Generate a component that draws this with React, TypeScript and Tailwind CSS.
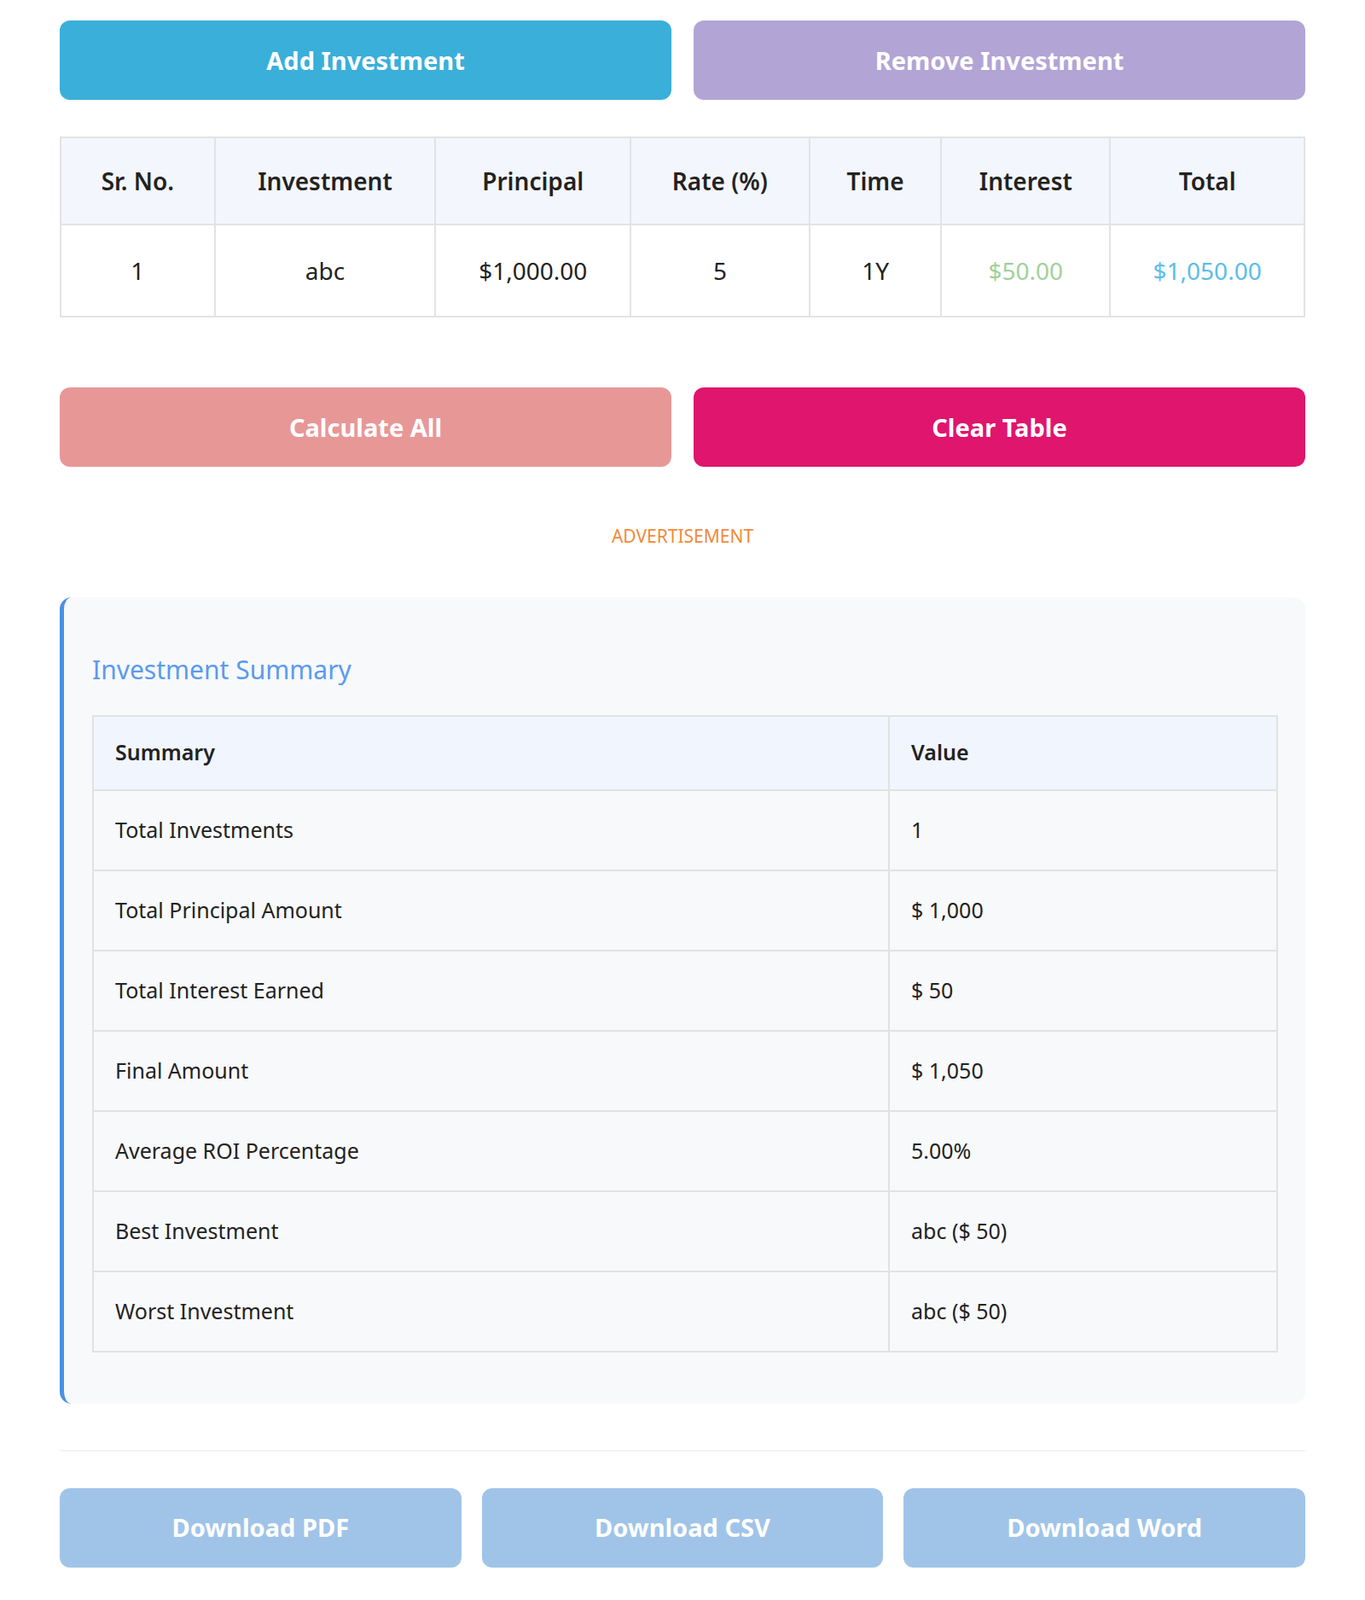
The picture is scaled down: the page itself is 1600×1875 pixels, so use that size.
import React from "react";

const Btn = ({ label, cls }: { label: string; cls: string }) => (
  <button
    className={`h-[93px] rounded-[12px] text-white font-bold text-[29px] font-['Liberation_Sans',Arial,sans-serif] ${cls}`}
  >
    {label}
  </button>
);

const summary = [
  ["Total Investments", "1"],
  ["Total Principal Amount", "$ 1,000"],
  ["Total Interest Earned", "$ 50"],
  ["Final Amount", "$ 1,050"],
  ["Average ROI Percentage", "5.00%"],
  ["Best Investment", "abc ($ 50)"],
  ["Worst Investment", "abc ($ 50)"],
];

export default function App() {
  const heads = ["Sr. No.", "Investment", "Principal", "Rate (%)", "Time", "Interest", "Total"];
  const widths = ["w-[181px]", "w-[259px]", "w-[229px]", "w-[210px]", "w-[155px]", "w-[198px]", "w-[228px]"];
  return (
    <div className="bg-white min-h-[1875px] px-[70px] pt-[24px] font-['Open_Sans','Noto_Sans',sans-serif] text-[#222]">
      <div className="grid grid-cols-2 gap-[26px]">
        <Btn label="Add Investment" cls="bg-[#3aafda]" />
        <Btn label="Remove Investment" cls="bg-[#b2a5d5]" />
      </div>

      <table className="mt-[43px] w-full border-collapse text-[28px] text-center">
        <thead>
          <tr className="bg-[#f3f6fd] h-[102px]">
            {heads.map((h, i) => (
              <th key={h} className={`border-2 border-[#e3e3e3] font-semibold ${widths[i]}`}>{h}</th>
            ))}
          </tr>
        </thead>
        <tbody>
          <tr className="h-[108px]">
            <td className="border-2 border-[#e3e3e3]">1</td>
            <td className="border-2 border-[#e3e3e3]">abc</td>
            <td className="border-2 border-[#e3e3e3]">$1,000.00</td>
            <td className="border-2 border-[#e3e3e3]">5</td>
            <td className="border-2 border-[#e3e3e3]">1Y</td>
            <td className="border-2 border-[#e3e3e3] text-[#9fd19a]">$50.00</td>
            <td className="border-2 border-[#e3e3e3] text-[#5bbde8]">$1,050.00</td>
          </tr>
        </tbody>
      </table>

      <div className="mt-[82px] grid grid-cols-2 gap-[26px]">
        <Btn label="Calculate All" cls="bg-[#e89797]" />
        <Btn label="Clear Table" cls="bg-[#e0156d]" />
      </div>

      <div className="mt-[66px] text-center text-[#f28a3a] text-[21px]">ADVERTISEMENT</div>

      <div className="mt-[55px] bg-[#f8f9fb] rounded-[14px] border-l-[5px] border-[#4a90e2] pl-[33px] pr-[32px] pt-[70px] pb-[60px]">
        <h3 className="text-[#5a9af0] text-[30px] leading-none">Investment Summary</h3>
        <table className="mt-[38px] w-full border-collapse text-[25px] text-left">
          <thead>
            <tr className="bg-[#f1f5fd] h-[87px]">
              <th className="border-2 border-[#e2e2e2] font-semibold px-[25px] w-[933px]">Summary</th>
              <th className="border-2 border-[#e2e2e2] font-semibold px-[25px]">Value</th>
            </tr>
          </thead>
          <tbody>
            {summary.map(([k, v]) => (
              <tr key={k} className="h-[94px]">
                <td className="border-2 border-[#e2e2e2] px-[25px]">{k}</td>
                <td className="border-2 border-[#e2e2e2] px-[25px]">{v}</td>
              </tr>
            ))}
          </tbody>
        </table>
      </div>

      <div className="mt-[54px] border-t-2 border-[#f1f3f8]" />

      <div className="mt-[43px] grid grid-cols-3 gap-[24px]">
        <Btn label="Download PDF" cls="bg-[#a0c4e8]" />
        <Btn label="Download CSV" cls="bg-[#a0c4e8]" />
        <Btn label="Download Word" cls="bg-[#a0c4e8]" />
      </div>
    </div>
  );
}
